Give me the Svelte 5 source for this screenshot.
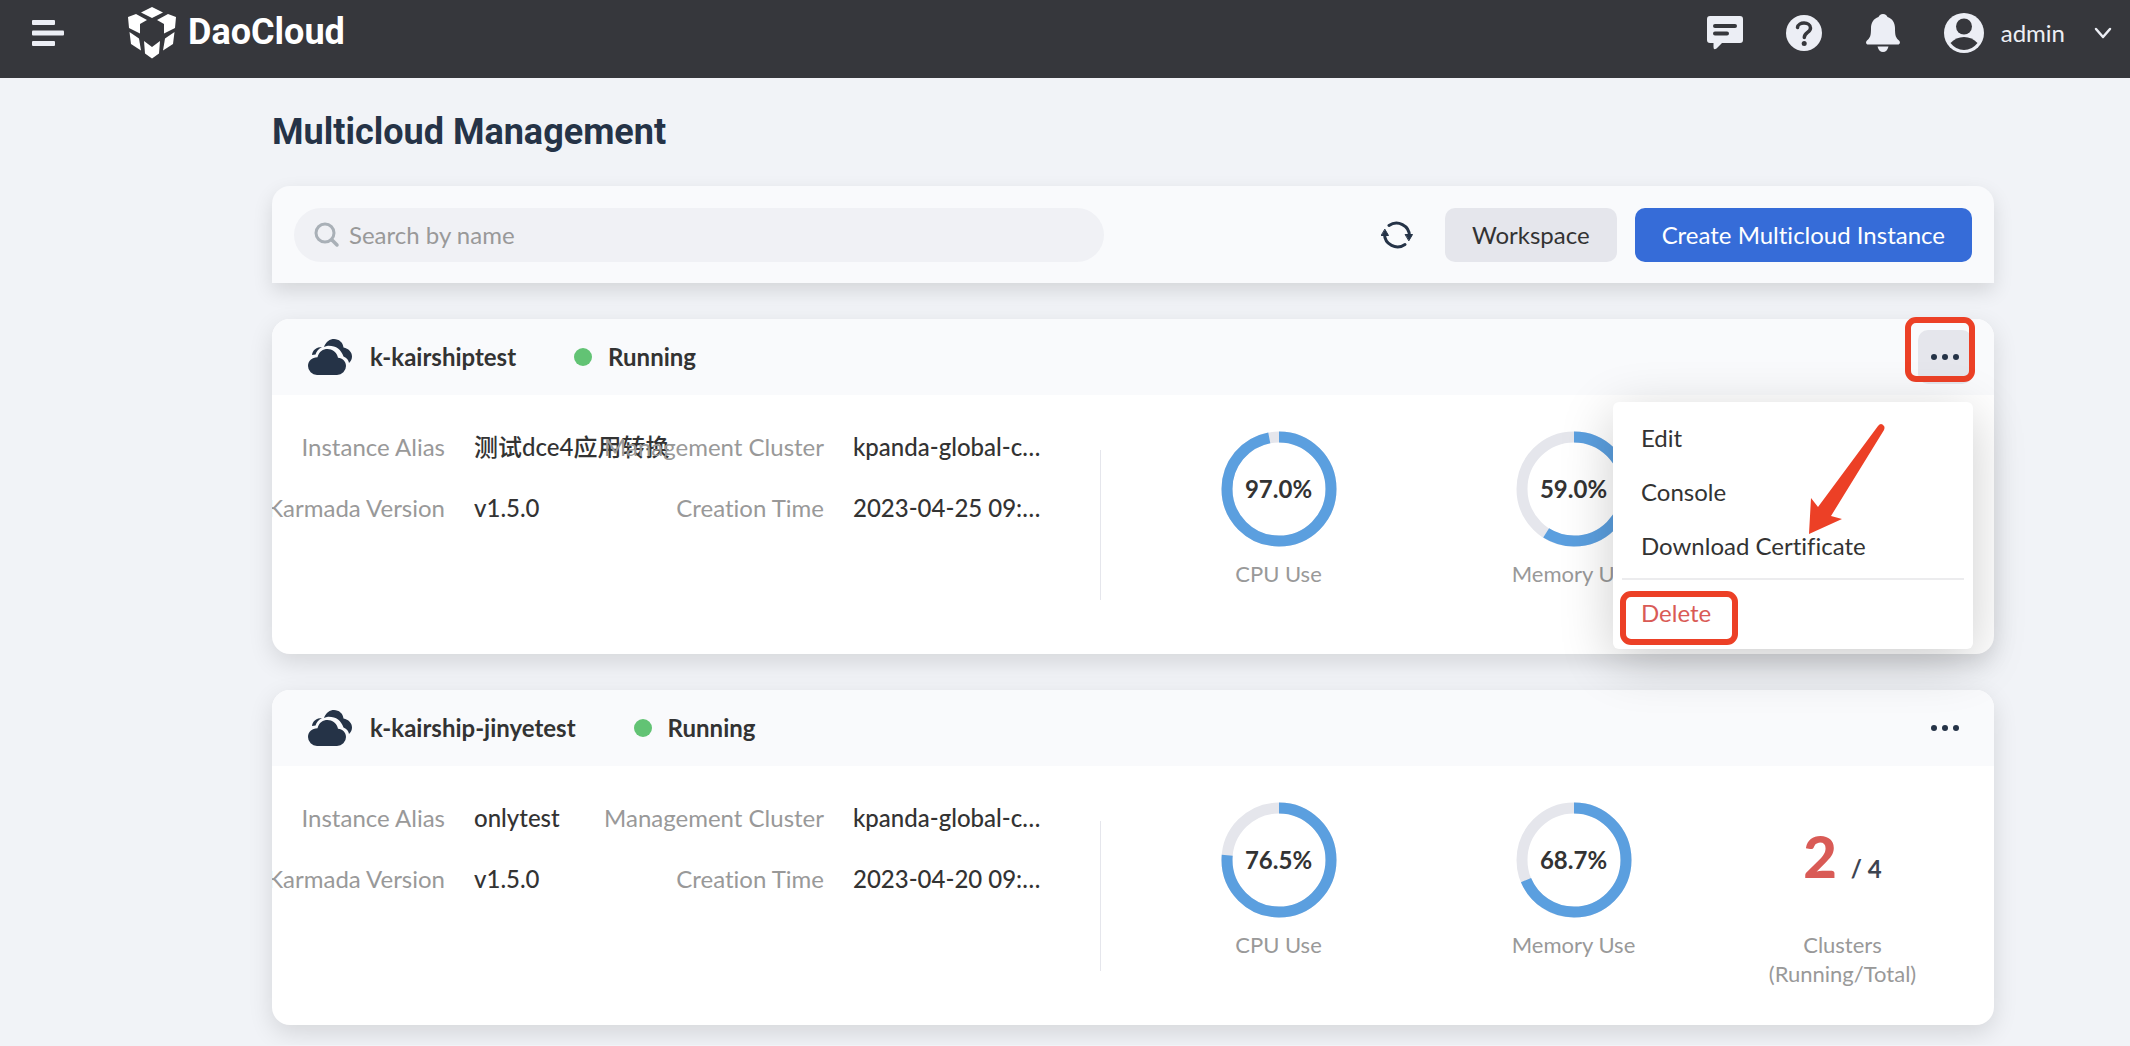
<script>
  const instances = [
    {
      name: 'k-kairshiptest',
      alias: '测试dce4应用转换',
      version: 'v1.5.0',
      cluster: 'kpanda-global-c…',
      created: '2023-04-25 09:…',
      cpu: 97.0,
      memory: 59.0,
      clusters: null,
      open: true
    },
    {
      name: 'k-kairship-jinyetest',
      alias: 'onlytest',
      version: 'v1.5.0',
      cluster: 'kpanda-global-c…',
      created: '2023-04-20 09:…',
      cpu: 76.5,
      memory: 68.7,
      clusters: { running: 2, total: 4 },
      open: false
    }
  ];
</script>

{#snippet gauge(value, label)}
  <div class="stat">
    <div class="ring">
      <svg viewBox="0 0 116 116" aria-hidden="true">
        <circle class="track" cx="58" cy="58" r="52" />
        <circle class="fill" cx="58" cy="58" r="52" pathLength="100" stroke-dasharray="{value} 100" transform="rotate(-90 58 58)" />
      </svg>
      <strong>{value.toFixed(1)}%</strong>
    </div>
    <span class="caption">{label}</span>
  </div>
{/snippet}

<header class="topbar">
  <button class="plain" aria-label="Menu">
    <svg width="32" height="26" viewBox="0 0 32 26" fill="#eceef5">
      <rect width="23" height="5" rx="1" /><rect y="10.500" width="32" height="5" rx="1" /><rect y="21" width="23" height="5" rx="1" />
    </svg>
  </button>
  <a class="brand" href="#home">
    <svg width="48" height="52" viewBox="0 0 48 52" fill="#fff" aria-hidden="true">
      <path d="M24 0 35 5.500 24 11 13 5.500z" />
      <path d="M8 7 19 13 12 17V26.500L1 21 0 10z" />
      <path d="M40 7 29 13 36 17V26.500L47 21 48 10z" />
      <path d="M1.500 25 11 31.500 13 43.500 3 37z" />
      <path d="M46.500 25 37 31.500 35 43.500 45 37z" />
      <path d="M16 34 24 40 32 34 31 46.500 24 51.500 17 46.500z" />
    </svg>
    <span>DaoCloud</span>
  </a>
  <nav class="tools">
    <button class="plain" aria-label="Messages">
      <svg width="36" height="36" viewBox="0 0 36 36">
        <path fill="#eceef5" d="M3 1h30a3 3 0 0 1 3 3v21a3 3 0 0 1-3 3H15l-5.500 5.500Q6.500 35.500 6.500 32V28H3a3 3 0 0 1-3-3V4a3 3 0 0 1 3-3z" />
        <path stroke="#36373c" stroke-width="4" stroke-linecap="round" d="M8 11h20M8 18.500h12" />
      </svg>
    </button>
    <button class="plain" aria-label="Help">
      <svg width="36" height="36" viewBox="0 0 36 36">
        <circle cx="18" cy="18" r="18" fill="#eceef5" />
        <path fill="none" stroke="#36373c" stroke-width="3.500" stroke-linecap="round" d="M11.500 12.500C12 6.500 24.500 6.500 24.500 13c0 4.500-6.200 4.500-6.200 9.500" />
        <circle cx="18.200" cy="28.500" r="2.500" fill="#36373c" />
      </svg>
    </button>
    <button class="plain" aria-label="Notifications">
      <svg width="36" height="38" viewBox="0 0 36 38" fill="#eceef5">
        <path d="M18 0c2.500 0 4 1.500 4.500 3 5 1.500 7.500 6 7.500 11 0 8 .8 9.500 4 12.500 2 2 .5 4-1 4H3c-1.500 0-3-2-1-4C5.200 23.500 6 22 6 14c0-5 2.500-9.500 7.500-11 .5-1.500 2-3 4.500-3z" />
        <path d="M12.500 32.500h11Q22 38 18 38t-5.500-5.500z" />
      </svg>
    </button>
    <button class="plain user">
      <svg width="40" height="40" viewBox="0 0 40 40" aria-hidden="true">
        <circle cx="20" cy="20" r="20" fill="#eceef5" />
        <circle cx="20" cy="13.500" r="8" fill="#36373c" />
        <path fill="#36373c" d="M6.500 30Q12 24 20 24t13.500 6Q28 37 20 37T6.500 30z" />
      </svg>
      <span>admin</span>
      <svg class="chevron" width="18" height="12" viewBox="0 0 18 12" aria-hidden="true">
        <path fill="none" stroke="#eceef5" stroke-width="2.500" stroke-linecap="round" stroke-linejoin="round" d="M2 2l7 8 7-8" />
      </svg>
    </button>
  </nav>
</header>

<main>
  <h1>Multicloud Management</h1>

  <section class="toolbar">
    <label class="search">
      <svg width="26" height="26" viewBox="0 0 26 26" fill="none" stroke="#a9b0b7" stroke-linecap="round" aria-hidden="true">
        <circle cx="11" cy="11" r="9" stroke-width="3" /><path stroke-width="3.500" d="M18 18l5 5" />
      </svg>
      <input type="text" placeholder="Search by name" aria-label="Search by name" />
    </label>
    <div class="actions">
      <button class="plain" aria-label="Refresh">
        <svg width="32" height="30" viewBox="0 0 32 30" fill="none" stroke="#253347" stroke-width="3" stroke-linecap="round">
          <path d="M8 5.500A13 13 0 0 1 28.500 16M24 24.500A13 13 0 0 1 3.500 14" />
          <path fill="#253347" stroke-width="1" stroke-linejoin="round" d="M24.500 14.500h7L28 20.500zM.5 15.500h7L4 9.500z" />
        </svg>
      </button>
      <button class="btn">Workspace</button>
      <button class="btn primary">Create Multicloud Instance</button>
    </div>
  </section>

  {#each instances as item}
    <article class="card">
      <header class="head">
        <svg width="44" height="36" viewBox="0 0 44 36" fill="#253347" aria-hidden="true">
          <path d="M16 8C18 2.500 22 0 26 0c5 0 9 3.500 9.500 8.500C40.500 9.500 44 13 44 17.500c0 2.500-1 4.500-3 6.500-.5-3-2-5-5.500-6.500C33 10.500 28 6.500 20 6.800 18.500 6.900 17.500 7.300 16 8z" />
          <path d="M4 16c.5-5 4.500-8 10-8-3.500 1.800-5.500 4.500-6.500 7.500z" />
          <path d="M9 36a9 9 0 0 1-9-9c0-5 4-8.500 9.500-8.700C11 12.500 15 10 19.500 10S29 13 30 18.800c4.500.4 8 3.700 8 8.200a9 9 0 0 1-9 9z" />
        </svg>
        <h2>{item.name}</h2>
        <span class="status">Running</span>
        <div class="more-wrap">
          <button class="more" class:active={item.open} aria-label="More actions">
            <i></i><i></i><i></i>
          </button>
          {#if item.open}<span class="mark mark-more"></span>{/if}
        </div>
      </header>
      <div class="body">
        <dl>
          <div><dt>Instance Alias</dt><dd>{item.alias}</dd></div>
          <div><dt>Management Cluster</dt><dd>{item.cluster}</dd></div>
          <div><dt>Karmada Version</dt><dd>{item.version}</dd></div>
          <div><dt>Creation Time</dt><dd>{item.created}</dd></div>
        </dl>
        <div class="divider"></div>
        <div class="stats">
          {@render gauge(item.cpu, 'CPU Use')}
          {@render gauge(item.memory, 'Memory Use')}
          {#if item.clusters}
            <div class="stat">
              <div class="count"><b>{item.clusters.running}</b><span>/ {item.clusters.total}</span></div>
              <span class="caption">Clusters (Running/Total)</span>
            </div>
          {/if}
        </div>
      </div>
      {#if item.open}
        <div class="menu">
          <button>Edit</button>
          <button>Console</button>
          <button>Download Certificate</button>
          <hr />
          <button class="danger">Delete</button>
          <span class="mark mark-delete"></span>
          <svg class="arrow" width="76" height="112" viewBox="0 0 76 112" fill="#ec4026" aria-hidden="true">
            <path d="M0 111 2 75l7 9L69 3q3-4 6 0 1 1.500 0 4L22 93l11 3z" />
          </svg>
        </div>
      {/if}
    </article>
  {/each}
</main>

<style>
  :global(body) {
    margin: 0;
    background: #f1f3f7;
    color: #333;
    font: 24px/32px Lato, 'Noto Sans CJK SC', sans-serif;
    font-variant-ligatures: none;
  }
  button, input { font: inherit; color: inherit; font-variant-ligatures: inherit; }
  button { border: 0; cursor: pointer; }
  .plain { display: flex; padding: 0; background: none; }
  svg { flex: none; }

  .topbar {
    display: flex;
    align-items: center;
    height: 66px;
    padding: 0 18px 12px 32px;
    background: #36373c;
    color: #eceef5;
  }
  .brand {
    display: flex;
    align-items: center;
    gap: 12px;
    margin-left: 64px;
    color: #fff;
    font: 700 36px/52px Roboto, sans-serif;
    text-decoration: none;
  }
  .brand span { padding-bottom: 2px; }
  .tools { display: flex; align-items: center; gap: 43px; margin-left: auto; }
  .user { align-items: center; gap: 17px; }
  .chevron { margin-left: 12px; }

  main { padding: 0 136px 20px 272px; }
  h1 {
    margin: 0;
    padding: 32px 0;
    color: #253347;
    font: 700 36px/44px Roboto, sans-serif;
  }
  .toolbar {
    display: flex;
    align-items: center;
    justify-content: space-between;
    padding: 22px 22px 21px;
    border-radius: 18px 18px 0 0;
    background: #f9fafc;
    box-shadow: 0 8px 20px rgba(0, 0, 0, 0.12);
  }
  .search {
    display: flex;
    align-items: center;
    gap: 9px;
    flex: 0 1 770px;
    height: 54px;
    padding: 0 20px;
    border-radius: 27px;
    background: #f0f1f5;
  }
  .search input { flex: 1; min-width: 0; border: 0; padding: 0; background: none; outline: 0; }
  .search input::placeholder { color: #999; opacity: 1; }
  .actions { display: flex; align-items: center; gap: 18px; }
  .actions .plain { margin-right: 14px; }
  .btn { height: 54px; padding: 0 27px; border-radius: 10px; background: #e5e6ec; }
  .primary { background: #366cd8; color: #fff; }

  .card {
    position: relative;
    margin-top: 36px;
    border-radius: 18px;
    background: #fff;
    box-shadow: 0 8px 24px rgba(0, 0, 0, 0.12);
  }
  .head {
    display: flex;
    align-items: center;
    height: 76px;
    padding: 0 22px 0 36px;
    border-radius: 18px 18px 0 0;
    background: #f9fafc;
  }
  h2 { margin: 0 58px 0 18px; font: inherit; font-weight: 700; }
  .status { display: flex; align-items: center; gap: 16px; font-weight: 700; }
  .status::before { content: ''; width: 18px; height: 18px; border-radius: 50%; background: #62c374; }
  .more-wrap { position: relative; margin-left: auto; }
  .more {
    display: flex;
    align-items: center;
    justify-content: center;
    gap: 5px;
    width: 54px;
    height: 54px;
    padding: 0;
    border-radius: 10px;
    background: none;
  }
  .more.active { background: #e5e6ec; }
  .more i { width: 6px; height: 6px; border-radius: 50%; background: #253347; }

  .body {
    display: grid;
    grid-template-columns: 828fr 1px 893fr;
    height: 259px;
    border-radius: 0 0 18px 18px;
    overflow: hidden;
  }
  dl {
    display: grid;
    grid-template-columns: 1fr 1fr;
    align-content: start;
    row-gap: 29px;
    margin: 0;
    padding: 36px 51px 0 19px;
    min-width: 0;
  }
  dl div { display: grid; grid-template-columns: 154fr 196fr; column-gap: 29px; min-width: 0; }
  dt, dd { margin: 0; min-width: 0; white-space: nowrap; }
  dt { display: flex; justify-content: flex-end; color: #999; }
  dd { font-weight: 500; }
  .divider { align-self: center; height: 150px; background: #e5e6ec; }
  .stats {
    display: grid;
    grid-template-columns: 295fr 295fr 243fr;
    align-items: start;
    padding: 36px 30px 0;
  }
  .stat { display: flex; flex-direction: column; align-items: center; gap: 12px; }
  .ring { display: grid; place-items: center; width: 116px; height: 116px; }
  .ring svg, .ring strong { grid-area: 1 / 1; }
  circle.track, circle.fill { fill: none; stroke-width: 11px; }
  .track { stroke: #e5e6ec; }
  .fill { stroke: #5b9fdf; }
  .caption { width: 160px; color: #999; font-size: 22px; line-height: 29px; text-align: center; }
  .count { display: flex; align-items: baseline; gap: 14px; height: 116px; color: #3d4451; font-weight: 700; }
  .count b { color: #d95b56; font-size: 58px; line-height: 108px; }

  .menu {
    position: absolute;
    z-index: 2;
    top: 83px;
    right: 21px;
    width: 342px;
    padding: 9px;
    border-radius: 6px;
    background: #fff;
    box-shadow: 0 12px 54px rgba(0, 0, 0, 0.2);
  }
  .menu button { display: block; width: 100%; height: 54px; padding: 0 19px; background: none; text-align: left; }
  .menu hr { margin: 5px 0 6px; border: 0; border-top: 2px solid #ececee; }
  .menu .danger { color: #d95b56; }
  .mark { position: absolute; box-sizing: border-box; border: 6px solid #ec4026; border-radius: 11px; pointer-events: none; }
  .mark-more { top: -13px; left: -13px; width: 70px; height: 65px; }
  .mark-delete { left: 7px; bottom: 4px; width: 118px; height: 54px; }
  .arrow { position: absolute; top: 21px; left: 196px; pointer-events: none; }
</style>
